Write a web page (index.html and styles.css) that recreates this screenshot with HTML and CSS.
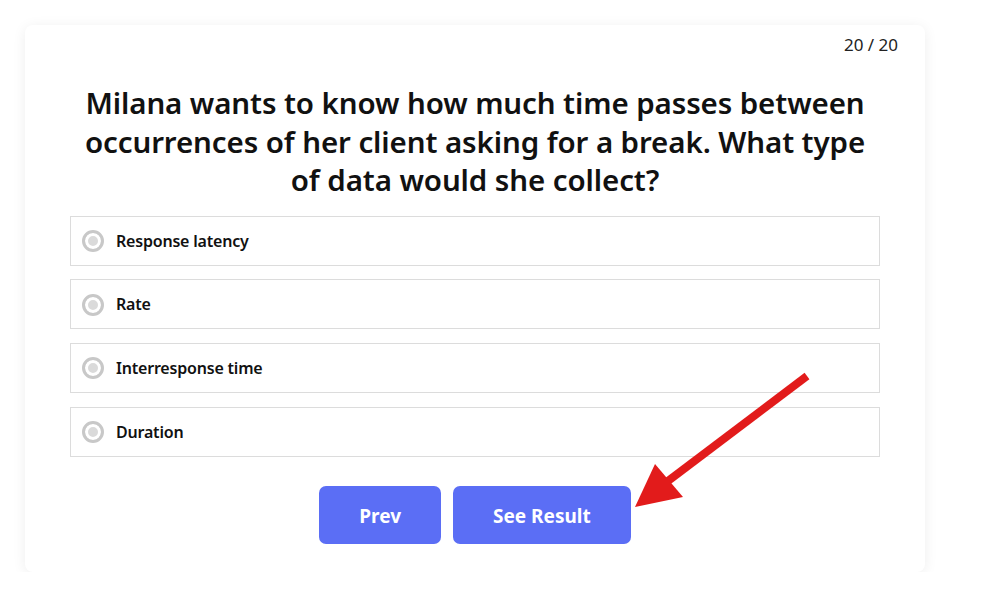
FILE: index.html
```html
<!DOCTYPE html>
<html lang="en">

<head>
    <meta charset="UTF-8">
    <meta name="viewport" content="width=device-width, initial-scale=1.0">
    <title>Quiz</title>
    <link rel="stylesheet" href="styles.css">
</head>

<body>
    <main class="quiz-card">
        <div class="counter">20 / 20</div>
        <h1 class="question">Milana wants to know how much time passes between occurrences of her client asking for a break. What type of data would she collect?</h1>
        <ul class="options">
            <li class="option"><span class="radio"></span>Response latency</li>
            <li class="option"><span class="radio"></span>Rate</li>
            <li class="option"><span class="radio"></span>Interresponse time</li>
            <li class="option"><span class="radio"></span>Duration</li>
        </ul>
        <div class="nav">
            <button class="nav-button">Prev</button>
            <button class="nav-button">See Result</button>
        </div>
    </main>
    <svg class="arrow" width="992" height="592" viewBox="0 0 992 592">
        <line x1="807" y1="376" x2="664" y2="484" stroke="#e21b1b" stroke-width="8" />
        <polygon points="635,507 655,464 683,497" fill="#e21b1b" />
    </svg>
</body>

</html>
```

FILE: styles.css
```css
body {
    font-family: 'Noto Sans', 'Open Sans', sans-serif;
    margin: 0;
    padding: 25px 0 0 25px;
    background-color: #fff;
    color: #111;
}

.quiz-card {
    width: 900px;
    height: 547px;
    box-sizing: border-box;
    padding: 8px 45px 0;
    background-color: #fff;
    border-radius: 8px;
    box-shadow: 0 2px 14px rgba(0, 0, 0, 0.07);
}

.counter {
    text-align: right;
    font-size: 17px;
    line-height: 24px;
    margin-right: -18px;
    color: #222;
}

.question {
    margin: 27px 0 0;
    text-align: center;
    font-size: 29.5px;
    font-weight: 600;
    line-height: 38.5px;
    letter-spacing: -0.1px;
    padding: 0 14px;
}

.options {
    list-style: none;
    margin: 16px 0 0;
    padding: 0;
}

.option {
    display: flex;
    align-items: center;
    height: 50px;
    box-sizing: border-box;
    border: 1px solid #dcdcdc;
    margin-bottom: 13.7px;
    padding-left: 11px;
    font-size: 16px;
    font-weight: 600;
    letter-spacing: -0.2px;
}

.radio {
    width: 16px;
    height: 16px;
    border: 3px solid #c8c8c8;
    border-radius: 50%;
    background-color: #dadada;
    box-shadow: inset 0 0 0 3px #fff;
    margin-right: 12px;
    margin-top: 1px;
}

.nav {
    display: flex;
    justify-content: center;
    gap: 12px;
    margin-top: 29px;
}

.nav-button {
    font-family: inherit;
    background-color: #5b6ef5;
    color: #fff;
    border: none;
    border-radius: 7px;
    height: 58px;
    padding: 2px 40px 0;
    font-size: 19px;
    font-weight: 700;
    cursor: pointer;
}

.arrow {
    position: absolute;
    top: 0;
    left: 0;
    pointer-events: none;
}
```
